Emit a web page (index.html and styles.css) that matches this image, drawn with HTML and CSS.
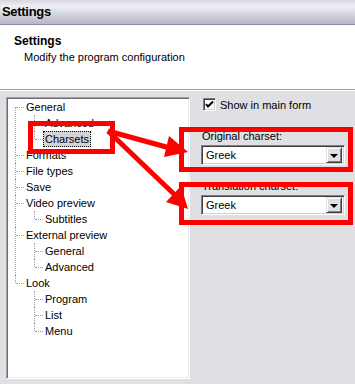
FILE: index.html
```html
<!DOCTYPE html>
<html lang="en">
<head>
  <meta charset="UTF-8">
  <title>Settings</title>
  <link rel="stylesheet" href="styles.css">
</head>
<body>

  <div class="window">
    <div class="titlebar">Settings</div>

    <div class="header">
      <h1>Settings</h1>
      <p>Modify the program configuration</p>
    </div>
    <div class="sep"></div>

    <div class="content">
      <div class="tree-box">
        <ul class="tree">
          <li>
            <div class="row"><span class="stub"></span><span class="label">General</span></div>
            <ul>
              <li><div class="row"><span class="stub"></span><span class="label">Advanced</span></div></li>
              <li><div class="row"><span class="stub"></span><span class="label sel">Charsets</span></div></li>
            </ul>
          </li>
          <li><div class="row"><span class="stub"></span><span class="label">Formats</span></div></li>
          <li><div class="row"><span class="stub"></span><span class="label">File types</span></div></li>
          <li><div class="row"><span class="stub"></span><span class="label">Save</span></div></li>
          <li>
            <div class="row"><span class="stub"></span><span class="label">Video preview</span></div>
            <ul>
              <li><div class="row"><span class="stub"></span><span class="label">Subtitles</span></div></li>
            </ul>
          </li>
          <li>
            <div class="row"><span class="stub"></span><span class="label">External preview</span></div>
            <ul>
              <li><div class="row"><span class="stub"></span><span class="label">General</span></div></li>
              <li><div class="row"><span class="stub"></span><span class="label">Advanced</span></div></li>
            </ul>
          </li>
          <li>
            <div class="row"><span class="stub"></span><span class="label">Look</span></div>
            <ul>
              <li><div class="row"><span class="stub"></span><span class="label">Program</span></div></li>
              <li><div class="row"><span class="stub"></span><span class="label">List</span></div></li>
              <li><div class="row"><span class="stub"></span><span class="label">Menu</span></div></li>
            </ul>
          </li>
        </ul>
      </div>

      <div class="options">
        <div class="check-row">
          <span class="checkbox">
            <svg width="9" height="9" viewBox="0 0 9 9"><polyline points="1,4 3,6.5 8,1.5" fill="none" stroke="#000" stroke-width="2"/></svg>
          </span>
          <span>Show in main form</span>
        </div>

        <div class="field-label first">Original charset:</div>
        <div class="combo">
          <span class="combo-text">Greek</span>
          <span class="combo-btn"><i class="arrow"></i></span>
        </div>

        <div class="field-label">Translation charset:</div>
        <div class="combo">
          <span class="combo-text">Greek</span>
          <span class="combo-btn"><i class="arrow"></i></span>
        </div>
      </div>
    </div>

    <!-- annotation drawn over the dialog -->
    <svg class="marks" width="355" height="384" viewBox="0 0 355 384">
      <g fill="none" stroke="#f00" stroke-width="5">
        <rect x="30.5" y="123.5" width="82" height="28"/>
        <rect x="181.5" y="129.5" width="169" height="40"/>
        <rect x="181.5" y="184.5" width="169" height="38"/>
        <line x1="108" y1="131" x2="170" y2="148"/>
        <line x1="108" y1="131" x2="176" y2="196"/>
      </g>
      <g fill="#f00">
        <polygon points="188,152 164,157 169,136"/>
        <polygon points="188,209 166,202 181,186"/>
      </g>
    </svg>
  </div>

</body>
</html>
```

FILE: styles.css
```css
* {
  box-sizing: border-box;
}

body {
  margin: 0;
  font-family: 'Liberation Sans', Arial, sans-serif;
  font-size: 11px;
  color: #000;
  background: #e0dfe3;
}

.window {
  position: relative;
  width: 355px;
  height: 384px;
  overflow: hidden;
  background: #e0dfe3;
  display: flex;
  flex-direction: column;
}

.titlebar {
  height: 25px;
  padding-left: 2px;
  line-height: 24px;
  font-size: 13px;
  font-weight: bold;
  letter-spacing: -0.3px;
  background: linear-gradient(to bottom, #d8d8e0 0, #efeff4 25%, #d4d4de 60%, #b6b6c6 100%);
  border-bottom: 1px solid #8f8fa0;
}

.header {
  height: 64px;
  background: #fff;
  padding: 8px 0 0 14px;
}

.header h1 {
  margin: 0;
  font-size: 12px;
  line-height: 16px;
}

.header p {
  margin: 0 0 0 10px;
  line-height: 16px;
}

.sep {
  border-top: 1px solid #a0a0a4;
  border-bottom: 1px solid #fff;
}

.content {
  display: flex;
  gap: 11px;
  padding: 6px 0 0 6px;
}

.tree-box {
  width: 184px;
  height: 282px;
  background: #fff;
  border: 1px solid;
  border-color: #a0a0a4 #fff #fff #a0a0a4;
  box-shadow: inset 1px 1px #6e6e72, inset -1px -1px #ececf0;
  padding-top: 1px;
}

.tree,
.tree ul {
  list-style: none;
  margin: 0;
  padding: 0;
}

.tree {
  padding-left: 8px;
}

.tree ul {
  padding-left: 19px;
}

.tree li {
  position: relative;
}

.tree li::before {
  content: "";
  position: absolute;
  left: 0;
  top: 0;
  bottom: 0;
  border-left: 1px dotted #a0a0a0;
}

.tree > li:first-child::before {
  top: 8px;
}

.tree li:last-child::before {
  bottom: auto;
  height: 8px;
}

.row {
  display: flex;
  align-items: center;
  height: 16px;
  padding-left: 1px;
}

.stub {
  width: 8px;
  border-top: 1px dotted #a0a0a0;
}

.label {
  padding: 0 1px;
  line-height: 14px;
  border: 1px solid transparent;
  white-space: nowrap;
}

.label.sel {
  background: #d4d3d8;
  border: 1px dotted #000;
}

.options {
  width: 144px;
  display: flex;
  flex-direction: column;
}

.check-row {
  display: flex;
  align-items: center;
  gap: 4px;
  height: 13px;
  margin: 1px 0 0 2px;
}

.checkbox {
  width: 13px;
  height: 13px;
  background: #fff;
  border: 1px solid;
  border-color: #808080 #fff #fff #808080;
  box-shadow: inset 1px 1px #404040, inset -1px -1px #d4d0c8;
  display: flex;
  align-items: center;
  justify-content: center;
}

.field-label {
  margin: 15px 0 2px 1px;
  line-height: 13px;
}

.field-label.first {
  margin-top: 19px;
}

.combo {
  height: 20px;
  background: #fff;
  border: 1px solid;
  border-color: #808080 #fff #fff #808080;
  box-shadow: inset 1px 1px #404040, inset -1px -1px #d4d0c8;
  display: flex;
  align-items: center;
  padding: 2px 2px 2px 4px;
}

.combo-text {
  flex: 1;
}

.combo-btn {
  width: 16px;
  height: 16px;
  background: #e0dfe3;
  border: 1px solid;
  border-color: #e0dfe3 #404040 #404040 #e0dfe3;
  box-shadow: inset 1px 1px #fff, inset -1px -1px #808080;
  display: flex;
  align-items: center;
  justify-content: center;
}

.arrow {
  width: 0;
  height: 0;
  border-left: 4px solid transparent;
  border-right: 4px solid transparent;
  border-top: 4px solid #000;
  margin-top: 1px;
}

.marks {
  position: absolute;
  left: 0;
  top: 0;
  pointer-events: none;
}
```
